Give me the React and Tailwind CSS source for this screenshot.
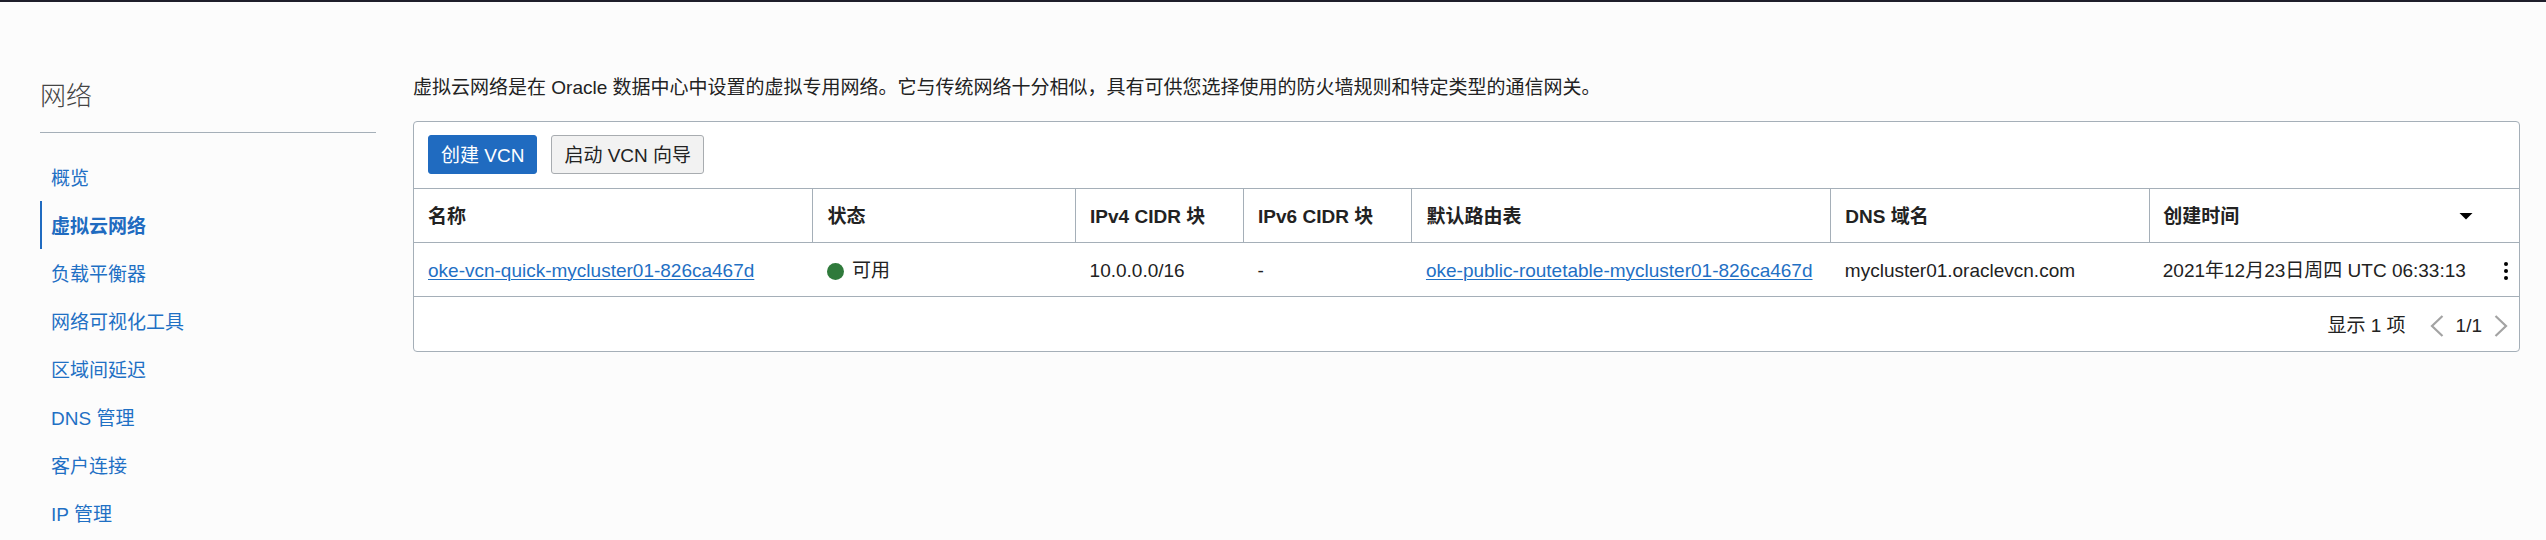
const navItems = [
  "概览",
  "虚拟云网络",
  "负载平衡器",
  "网络可视化工具",
  "区域间延迟",
  "DNS 管理",
  "客户连接",
  "IP 管理",
];

const columns = ["名称", "状态", "IPv4 CIDR 块", "IPv6 CIDR 块", "默认路由表", "DNS 域名"];

function Sidebar() {
  const active = "虚拟云网络";
  return (
    <aside className="w-[336px] shrink-0">
      <h1 className="border-b border-[#a5afb8] pb-[22px] text-[26px] font-light leading-7 text-[#444]">网络</h1>
      <nav className="pt-5">
        <ul>
          {navItems.map((item) => (
            <li key={item}>
              <a
                href="#"
                aria-current={item === active ? "page" : undefined}
                className={
                  item === active
                    ? "flex h-12 items-center border-l-2 border-[#206bc0] pt-[3px] pl-[9px] font-bold text-[#206bc0]"
                    : "flex h-12 items-center border-l-2 border-transparent pt-[3px] pl-[9px] text-[#1f70c4]"
                }
              >
                {item}
              </a>
            </li>
          ))}
        </ul>
      </nav>
    </aside>
  );
}

function NetworkTable() {
  return (
    <table className="w-full table-fixed border-collapse text-left">
      <colgroup>
        <col className="w-[18.95%]" />
        <col className="w-[12.48%]" />
        <col className="w-[7.98%]" />
        <col className="w-[8%]" />
        <col className="w-[19.9%]" />
        <col className="w-[15.15%]" />
        <col />
        <col className="w-10" />
      </colgroup>
      <thead>
        <tr className="h-[54px] border-y border-[#a5afb8]">
          {columns.map((name) => (
            <th key={name} scope="col" className="border-r border-[#a5afb8] px-[14px] pt-[3px] font-bold whitespace-nowrap">
              {name}
            </th>
          ))}
          <th scope="col" aria-sort="descending" className="pt-[3px] pr-[6px] pl-[13px] font-bold">
            <button type="button" className="flex w-full items-center justify-between">
              创建时间
              <svg width="14" height="8" viewBox="0 0 14 8" aria-hidden="true">
                <path d="M0.5 0h13L7 6.5z" fill="#000" />
              </svg>
            </button>
          </th>
          <td />
        </tr>
      </thead>
      <tbody>
        <tr className="h-[54px] border-b border-[#a5afb8] whitespace-nowrap">
          <td className="px-[14px] pt-[3px]">
            <a href="#" className="text-[#1f70c4] underline decoration-1 underline-offset-2">oke-vcn-quick-mycluster01-826ca467d</a>
          </td>
          <td className="px-[14px] pt-[3px]">
            <span className="flex items-center gap-2">
              <span className="size-[17px] rounded-full bg-[#2f7a3b]" />
              可用
            </span>
          </td>
          <td className="px-[14px] pt-[3px]">10.0.0.0/16</td>
          <td className="px-[14px] pt-[3px]">-</td>
          <td className="px-[14px] pt-[3px]">
            <a href="#" className="text-[#1f70c4] underline decoration-1 underline-offset-2">oke-public-routetable-mycluster01-826ca467d</a>
          </td>
          <td className="px-[14px] pt-[3px]">mycluster01.oraclevcn.com</td>
          <td className="pt-[3px] pl-[13px]">2021年12月23日周四 UTC 06:33:13</td>
          <td className="pt-[3px] pr-2">
            <button type="button" aria-label="操作" className="ml-auto flex w-[10px] justify-center">
              <svg width="4" height="18" viewBox="0 0 4 18" fill="#000" aria-hidden="true">
                <circle cx="2" cy="2" r="2" />
                <circle cx="2" cy="9" r="2" />
                <circle cx="2" cy="16" r="2" />
              </svg>
            </button>
          </td>
        </tr>
      </tbody>
    </table>
  );
}

function Chevron({ path }) {
  return (
    <svg width="14" height="22" viewBox="0 0 14 22" fill="none" stroke="#a3a3a3" strokeWidth="2.2" aria-hidden="true">
      <path d={path} />
    </svg>
  );
}

export default function App() {
  return (
    <div className="min-h-screen border-t-2 border-[#1f1f2b] bg-[#fcfcfc] font-['Liberation_Sans','Noto_Sans_CJK_SC',sans-serif] text-[19px] leading-7 text-[#222]">
      <div className="flex gap-[37px] pr-[26px] pl-10">
        <div className="pt-20">
          <Sidebar />
        </div>
        <main className="min-w-0 grow pt-[72px]">
          <p>
            虚拟云网络是在 Oracle 数据中心中设置的虚拟专用网络。它与传统网络十分相似，具有可供您选择使用的防火墙规则和特定类型的通信网关。
          </p>
          <section className="mt-[19px] rounded-[4px] border border-[#a5afb8] bg-white">
            <div className="flex gap-[14px] px-[14px] pt-[13px] pb-[14px]">
              <button type="button" className="h-[39px] rounded-[3px] border border-[#206bc0] bg-[#206bc0] px-3 pt-[3px] text-white">
                创建 VCN
              </button>
              <button type="button" className="h-[39px] rounded-[3px] border border-[#a8acb0] bg-[#f2f2f2] px-3 pt-[3px]">
                启动 VCN 向导
              </button>
            </div>
            <NetworkTable />
            <div className="flex h-[54px] items-center justify-end pt-[3px] pr-[11px]">
              <span>显示 1 项</span>
              <button type="button" aria-label="上一页" className="ml-6">
                <Chevron path="M12.5 1 2 11l10.5 10" />
              </button>
              <span className="mx-3">1/1</span>
              <button type="button" aria-label="下一页">
                <Chevron path="M1.5 1 12 11 1.5 21" />
              </button>
            </div>
          </section>
        </main>
      </div>
    </div>
  );
}
